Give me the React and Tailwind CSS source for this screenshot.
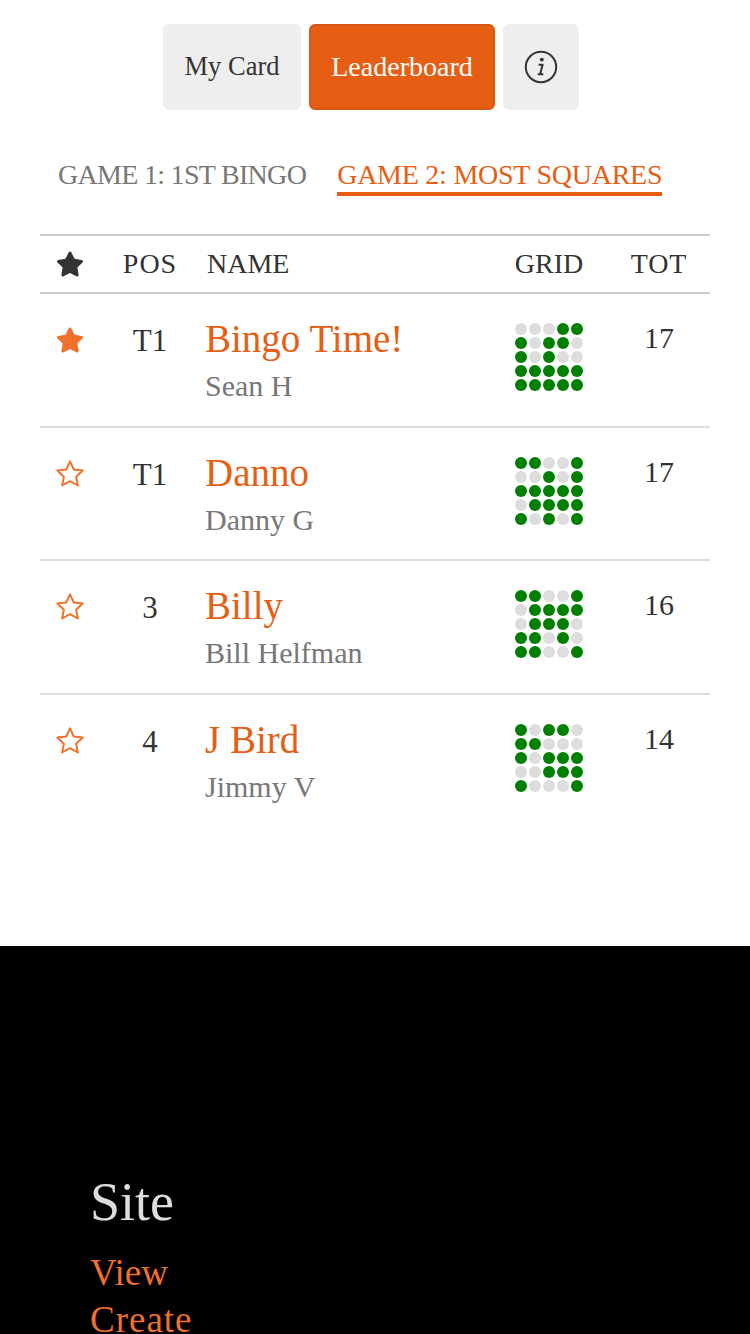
import React from 'react';
import { FaStar } from 'react-icons/fa';

const players = [
  { pos: 'T1', team: 'Bingo Time!', name: 'Sean H', tot: 17, starred: true, grid: ['00011', '10110', '10100', '11111', '11111'] },
  { pos: 'T1', team: 'Danno', name: 'Danny G', tot: 17, grid: ['11001', '00101', '11111', '01111', '10101'] },
  { pos: '3', team: 'Billy', name: 'Bill Helfman', tot: 16, grid: ['11001', '01111', '01110', '11010', '11001'] },
  { pos: '4', team: 'J Bird', name: 'Jimmy V', tot: 14, grid: ['10110', '11000', '10111', '00111', '10001'] },
];

const cols = 'grid grid-cols-[60px_100px_300px_98px_112px]';

function InfoIcon() {
  return (
    <svg width="34" height="34" viewBox="0 0 34 34" fill="none">
      <circle cx="17" cy="17" r="15.2" stroke="#333" strokeWidth="2" />
      <circle cx="17.8" cy="9.6" r="1.9" fill="#333" />
      <path d="M14.6 14.8h4l-2.5 9.4h3.2M13.8 24.2h3" stroke="#333" strokeWidth="2" strokeLinejoin="round" />
    </svg>
  );
}

function OutlineStar() {
  return (
    <svg className="justify-self-center mt-[3px]" width="28" height="28" viewBox="1 1 26 26" fill="none">
      <path d="M14 2.2l3.5 7.6 8.3 1-6.1 5.7 1.6 8.2L14 20.6l-7.3 4.1 1.6-8.2-6.1-5.7 8.3-1z" stroke="#f1702b" strokeWidth="1.8" strokeLinejoin="round" />
    </svg>
  );
}

function Dots({ grid }) {
  return (
    <div className="flex flex-col items-center gap-[2px]">
      {grid.map((row, i) => (
        <div key={i} className="flex gap-[2px]">
          {row.split('').map((c, j) => (
            <span key={j} className={c === '1' ? 'size-3 rounded-full bg-[#008000]' : 'size-3 rounded-full bg-[#dddddd]'} />
          ))}
        </div>
      ))}
    </div>
  );
}

export default function App() {
  return (
    <div className="h-[1334px] overflow-hidden flex flex-col bg-white text-[#333] font-['Liberation_Serif',serif]">
      <div className="flex justify-center gap-2 pt-6 pr-2">
        <button className="w-[138px] h-[86px] rounded-md bg-[#eeeeee] text-[26.5px]">My Card</button>
        <button className="w-[186px] h-[86px] rounded-md bg-[#e55e13] border-2 border-[#d45812] text-white text-[28px]">Leaderboard</button>
        <button className="w-[76px] h-[86px] rounded-md bg-[#eeeeee] flex items-center justify-center"><InfoIcon /></button>
      </div>

      <div className="flex gap-[31px] pl-[58px] mt-[47px] text-[28px] leading-[35px]">
        <span className="text-[#777] tracking-[-0.7px]">GAME 1: 1ST BINGO</span>
        <span className="text-[#e55e13] tracking-[-0.25px] border-b-4 border-[#e55e13]">GAME 2: MOST SQUARES</span>
      </div>

      <div className="mx-10 mt-[38px] border-t-2 border-[#cccccc]">
        <div className={`${cols} h-[58px] items-center border-b-2 border-[#cccccc] text-[28px]`}>
          <FaStar className="justify-self-center text-[28px] text-[#333]" />
          <span className="text-center tracking-[1px]">POS</span>
          <span className="pl-[7px]">NAME</span>
          <span className="text-center">GRID</span>
          <span className="text-center pl-[10px] tracking-[0.8px]">TOT</span>
        </div>
        {players.map((p, i) => (
          <div key={i} className={`${cols} h-[133.6px] pt-[29px] ${i < 3 ? 'border-b-2 border-[#dddddd]' : ''}`}>
            {p.starred
              ? <FaStar className="justify-self-center mt-[3px] text-[28px] text-[#f1702b]" />
              : <OutlineStar />}
            <span className="text-center text-[31px] leading-[36px]">{p.pos}</span>
            <div className="pl-[5px] -mt-[2px]">
              <div className="text-[39px] leading-[36px] text-[#e55e13]">{p.team}</div>
              <div className="mt-[11px] text-[30px] leading-[36px] text-[#777]">{p.name}</div>
            </div>
            <Dots grid={p.grid} />
            <span className="text-center pl-[10px] text-[30px] leading-[30px]">{p.tot}</span>
          </div>
        ))}
      </div>

      <div className="mt-[118px] flex-1 bg-black pl-[90px] pt-[226px]">
        <div className="text-[54px] leading-[60px] text-[#dddddd]">Site</div>
        <div className="mt-[17px] text-[37px] leading-[47px] text-[#f1702b]">View</div>
        <div className="text-[37px] leading-[47px] tracking-[1px] text-[#f1702b]">Create</div>
      </div>
    </div>
  );
}
